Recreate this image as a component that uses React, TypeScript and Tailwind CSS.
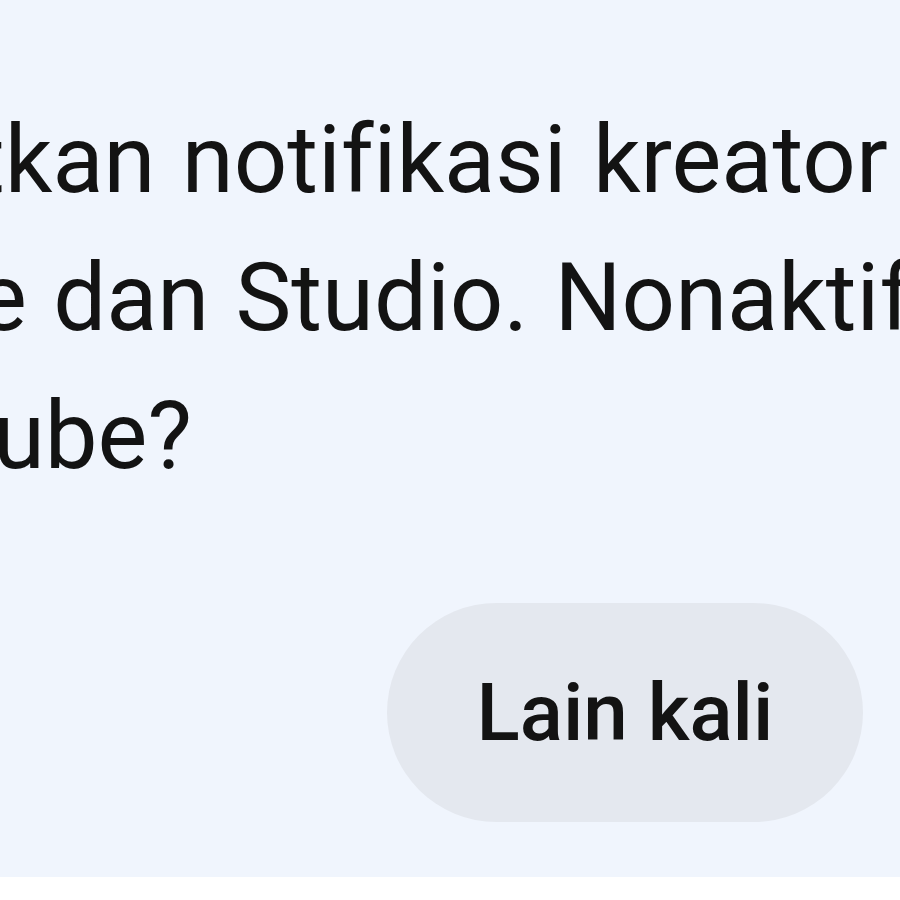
import React from 'react';

const lines = [
  { text: 'tkan notifikasi kreator', shift: 'ml-[-26px]' },
  { text: 'e dan Studio. Nonaktifkan', shift: 'ml-[-23px]' },
  { text: 'ube?', shift: 'ml-[-7px]' },
];

const App: React.FC = () => {
  return (
    <div className="w-[900px] h-[900px] bg-white overflow-hidden font-['Roboto',sans-serif]">
      <div className="h-[877px] bg-[#f0f5fd] flex flex-col pt-[91px]">
        <div className="text-[94px] leading-[138px] text-[#131313] [font-variant-ligatures:none] [word-spacing:3px]">
          {lines.map((line) => (
            <div key={line.text} className={`whitespace-nowrap ${line.shift}`}>
              {line.text}
            </div>
          ))}
        </div>
        <div className="flex justify-end pr-[37px] mt-[98px]">
          <button className="w-[476px] h-[219px] rounded-full bg-[#e4e8ef] text-[#131313] text-[80px] font-medium">
            Lain kali
          </button>
        </div>
      </div>
    </div>
  );
};

export default App;
